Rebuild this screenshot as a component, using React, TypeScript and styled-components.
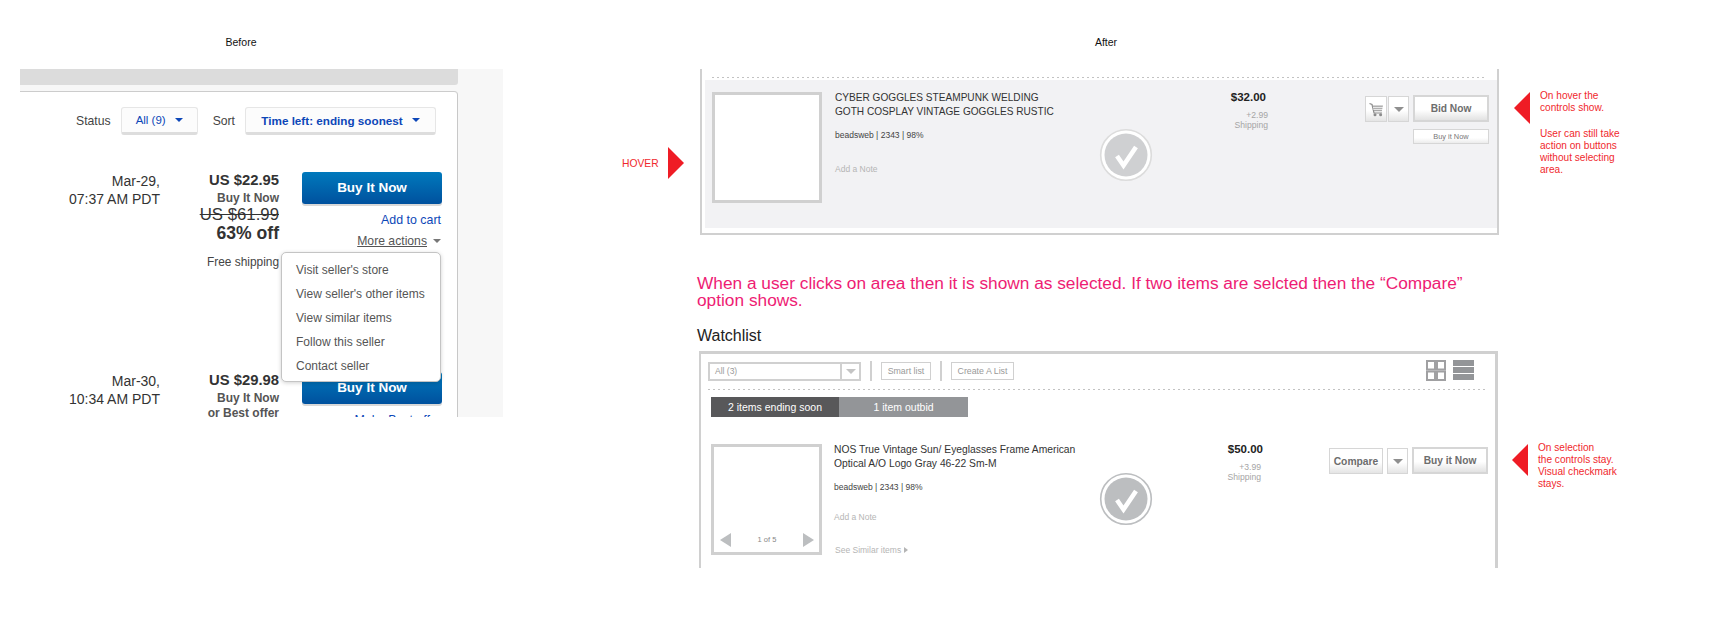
import React from "react";
import styled, { createGlobalStyle } from "styled-components";

const Global = createGlobalStyle`
  html, body { margin: 0; padding: 0; background: #fff; }
  body { font-family: "Liberation Sans", Arial, sans-serif; color: #333; }
`;

const Page = styled.div`
  display: flex;
  align-items: flex-start;
  width: 1723px;
  height: 640px;
  overflow: hidden;
  background: #fff;
`;
const BeforeCol = styled.section`
  margin-left: 20px;
  width: 483px;
  flex: none;
`;
const AfterCol = styled.section`
  margin-left: 119px;
  width: 1000px;
  flex: none;
`;
const Heading = styled.div<{ $w: number }>`
  width: ${(p) => p.$w}px;
  height: 69px;
  padding-top: 36px;
  box-sizing: border-box;
  text-align: center;
  font-size: 10.5px;
  line-height: 12px;
  color: #111;
`;

/* ---------- Before ---------- */
const Shot = styled.div`
  height: 348px;
  width: 483px;
  overflow: hidden;
  background: #f7f7f7;
`;
const GrayBar = styled.div`
  width: 438px;
  height: 16px;
  background: #dcdcdc;
  border-bottom-right-radius: 3px;
`;
const Card = styled.div`
  width: 438px;
  box-sizing: border-box;
  margin-top: 6px;
  height: 400px;
  background: #fff;
  border-top: 1px solid #ccc;
  border-right: 1px solid #c8c8c8;
  border-top-right-radius: 4px;
`;
const FilterRow = styled.div`
  display: flex;
  align-items: center;
  justify-content: flex-end;
  height: 28px;
  padding: 15px 21px 37px 0;
  font-size: 12.2px;
  color: #444;
`;
const FilterLabel = styled.span`
  margin: 0 10px 0 15px;
`;
const FilterButton = styled.div<{ $w: number }>`
  width: ${(p) => p.$w}px;
  height: 28px;
  box-sizing: border-box;
  display: flex;
  align-items: center;
  justify-content: center;
  gap: 9px;
  background: #fcfcfc;
  border: 1px solid #e6e6e6;
  border-bottom: 3px solid #ddd;
  border-radius: 3px;
  color: #0d47b8;
  font-size: 11.5px;
`;
const BoldBlue = styled.span`
  font-weight: 700;
  font-size: 11.7px;
`;
const Caret = styled.span<{ $c: string; $w?: number }>`
  display: inline-block;
  width: 0;
  height: 0;
  border-left: ${(p) => p.$w ?? 4.5}px solid transparent;
  border-right: ${(p) => p.$w ?? 4.5}px solid transparent;
  border-top: ${(p) => (p.$w ?? 4.5)}px solid ${(p) => p.$c};
`;
const Listing = styled.div`
  display: grid;
  grid-template-columns: 140px 119px 140px;
  column-gap: 0;
  height: 200px;
`;
const DateCell = styled.div`
  text-align: right;
  font-size: 14px;
  line-height: 18px;
  color: #333;
`;
const PriceCell = styled.div`
  text-align: right;
`;
const MainPrice = styled.div`
  font-size: 14.8px;
  line-height: 17px;
  font-weight: 700;
  color: #333;
`;
const Format = styled.div<{ $first?: boolean }>`
  margin-top: ${(p) => (p.$first ? 2 : 0)}px;
  font-size: 12px;
  line-height: 15px;
  font-weight: 700;
  color: #555;
`;
const WasPrice = styled.div`
  margin-top: 1px;
  font-size: 16.8px;
  line-height: 16px;
  color: #333;
  text-decoration: line-through;
`;
const Discount = styled.div`
  margin-top: 1px;
  font-size: 17.6px;
  line-height: 18px;
  font-weight: 700;
  color: #333;
`;
const Shipping = styled.div`
  margin-top: 12px;
  font-size: 11.9px;
  line-height: 16px;
  color: #444;
`;
const ActionCell = styled.div`
  position: relative;
  margin-left: 23px;
  width: 140px;
  text-align: right;
`;
const BuyButton = styled.div`
  height: 32px;
  line-height: 32px;
  text-align: center;
  border-radius: 3px;
  background: linear-gradient(#0079bc, #00519e);
  box-shadow: 0 2px 0 #d8d8d8;
  color: #fff;
  font-size: 13.5px;
  font-weight: 700;
`;
const ActionLink = styled.div`
  margin-top: 8px;
  padding-right: 1px;
  font-size: 12.4px;
  line-height: 16px;
  color: #0d47b8;
`;
const MoreActions = styled.div`
  margin-top: 5px;
  display: flex;
  justify-content: flex-end;
  align-items: center;
  gap: 6px;
  padding-right: 1px;
  font-size: 12.2px;
  line-height: 16px;
  color: #555;
`;
const Underlined = styled.span`
  text-decoration: underline;
`;
const Menu = styled.ul`
  position: absolute;
  z-index: 2;
  left: -21px;
  top: 80px;
  width: 160px;
  height: 130px;
  box-sizing: border-box;
  margin: 0;
  padding: 5px 0 0 14px;
  list-style: none;
  text-align: left;
  background: #fff;
  border: 1px solid #c4c4c4;
  border-radius: 5px;
  box-shadow: 0 1px 4px rgba(0, 0, 0, 0.18);
`;
const MenuItem = styled.li`
  height: 24px;
  line-height: 24px;
  font-size: 12px;
  color: #555;
`;

/* ---------- After ---------- */
const Band = styled.div`
  display: flex;
  align-items: flex-start;
`;
const HoverTag = styled.div`
  width: 78px;
  flex: none;
  padding-top: 78px;
  display: flex;
  align-items: center;
  gap: 9px;
  font-size: 10.3px;
  color: #f0282d;
`;
const WatchSpacer = styled.div`
  width: 77px;
  flex: none;
`;
const Arrow = styled.span<{ $dir: "left" | "right"; $w: number; $h: number; $c: string }>`
  display: inline-block;
  flex: none;
  width: 0;
  height: 0;
  border-top: ${(p) => p.$h / 2}px solid transparent;
  border-bottom: ${(p) => p.$h / 2}px solid transparent;
  ${(p) =>
    p.$dir === "left"
      ? `border-right: ${p.$w}px solid ${p.$c};`
      : `border-left: ${p.$w}px solid ${p.$c};`}
`;
const Note = styled.aside<{ $ml: number; $pt: number }>`
  flex: none;
  display: flex;
  align-items: flex-start;
  gap: 10px;
  margin-left: ${(p) => p.$ml}px;
  padding-top: ${(p) => p.$pt}px;
`;
const NoteText = styled.div`
  margin-top: -2px;
  width: 100px;
  font-size: 10.1px;
  line-height: 12px;
  color: #f0282d;
  p {
    margin: 0 0 14px;
  }
`;
const HoverCard = styled.div`
  flex: none;
  width: 799px;
  height: 166px;
  box-sizing: border-box;
  padding-top: 8px;
  border: 2px solid #d0d0d0;
  border-top: 0;
`;
const Dots = styled.div<{ $ml: number; $mr: number; $mt: number }>`
  height: 1px;
  margin: ${(p) => p.$mt}px ${(p) => p.$mr}px 0 ${(p) => p.$ml}px;
  background: repeating-linear-gradient(to right, #c2c2c2 0 2px, transparent 2px 5px);
`;
const HoverPanel = styled.div`
  margin: 2px 0 0 3px;
  height: 148px;
  box-sizing: border-box;
  padding: 12px 0 0 7px;
  background: #f2f2f4;
`;
const ItemRow = styled.div<{ $cols: string }>`
  display: grid;
  grid-template-columns: ${(p) => p.$cols};
  align-items: start;
`;
const Thumb = styled.div<{ $h: number }>`
  height: ${(p) => p.$h}px;
  box-sizing: border-box;
  border: 3px solid #d0d0d0;
  background: #fff;
  display: flex;
  justify-content: space-between;
  align-items: flex-end;
  padding: 0 5px 5px 6px;
`;
const PagerText = styled.span`
  font-size: 7.5px;
  line-height: 14px;
  color: #888;
`;
const Info = styled.div<{ $pl: number }>`
  padding-left: ${(p) => p.$pl}px;
  margin-top: -1px;
`;
const Title = styled.div<{ $size: number }>`
  font-size: ${(p) => p.$size}px;
  line-height: 14px;
  color: #333;
  white-space: nowrap;
`;
const Seller = styled.div`
  margin-top: 10px;
  font-size: 8.5px;
  line-height: 12px;
  color: #444;
`;
const AddNote = styled.div<{ $mt: number }>`
  margin-top: ${(p) => p.$mt}px;
  font-size: 8.5px;
  line-height: 12px;
  color: #b5b5b5;
`;
const Similar = styled.div`
  margin-top: 21px;
  margin-left: 1px;
  display: flex;
  align-items: center;
  gap: 3px;
  font-size: 8.5px;
  line-height: 12px;
  color: #b5b5b5;
`;
const CheckWrap = styled.div<{ $mt: number }>`
  margin-top: ${(p) => p.$mt}px;
  height: 54px;
`;
const PriceCol = styled.div`
  text-align: right;
  margin-top: -2px;
`;
const SmallPrice = styled.div<{ $pr: number }>`
  padding-right: ${(p) => p.$pr}px;
  font-size: 11.5px;
  line-height: 14px;
  font-weight: 700;
  color: #222;
`;
const ShipCost = styled.div<{ $pr: number }>`
  margin-top: 6px;
  padding-right: ${(p) => p.$pr}px;
  font-size: 8.6px;
  line-height: 10px;
  color: #a5a5a5;
`;
const Actions = styled.div<{ $ml: number }>`
  margin-left: ${(p) => p.$ml}px;
  margin-top: 3px;
  width: 160px;
`;
const ActionLine = styled.div`
  display: flex;
  align-items: flex-end;
  gap: 4px;
`;
const Square = styled.div<{ $w: number; $tight?: boolean }>`
  width: ${(p) => p.$w}px;
  height: 26px;
  box-sizing: border-box;
  margin-left: ${(p) => (p.$tight ? -3 : 0)}px;
  display: flex;
  align-items: center;
  justify-content: center;
  background: linear-gradient(#fff 55%, #e4e4e4);
  border: 1px solid #d6d6d6;
  font-size: 10.3px;
  font-weight: 700;
  color: #6d6d6d;
`;
const Primary = styled.div`
  width: 76px;
  height: 27px;
  box-sizing: border-box;
  display: flex;
  align-items: center;
  justify-content: center;
  background: linear-gradient(#fff 55%, #e2e2e2);
  border: 2px solid #d6d6d6;
  font-size: 10.2px;
  font-weight: 700;
  color: #6d6d6d;
`;
const Secondary = styled.div`
  width: 76px;
  height: 15px;
  box-sizing: border-box;
  margin: 7px 0 0 48px;
  text-align: center;
  background: linear-gradient(#fff 60%, #ececec);
  border: 1px solid #d6d6d6;
  font-size: 7.4px;
  line-height: 13px;
  color: #777;
`;
const Message = styled.p`
  margin: 40px 0 0 75px;
  width: 790px;
  font-size: 17.3px;
  line-height: 17px;
  color: #ee1c74;
`;
const ListHeading = styled.h2`
  margin: 17px 0 5px 75px;
  font-size: 16px;
  line-height: 20px;
  font-weight: 400;
  color: #222;
`;
const WatchCard = styled.div`
  flex: none;
  width: 799px;
  height: 217px;
  box-sizing: border-box;
  border: 3px solid #d0d0d0;
  border-left-width: 2px;
  border-bottom: 0;
`;
const Toolbar = styled.div`
  display: flex;
  align-items: flex-start;
  height: 19px;
  padding: 8px 21px 0 7px;
`;
const Select = styled.div`
  width: 153px;
  height: 19px;
  box-sizing: border-box;
  display: flex;
  justify-content: space-between;
  border: 2px solid #d0d0d0;
  margin-right: 9px;
  font-size: 8.5px;
  line-height: 15px;
  color: #999;
  padding-left: 5px;
`;
const SelectArrow = styled.div`
  width: 17px;
  border-left: 2px solid #d0d0d0;
  display: flex;
  align-items: center;
  justify-content: center;
`;
const Divider = styled.div`
  width: 2px;
  height: 20px;
  margin: -1px 9px 0 0;
  background: #d0d0d0;
`;
const ToolButton = styled.div<{ $w: number; $mr: number }>`
  width: ${(p) => p.$w}px;
  height: 18px;
  box-sizing: border-box;
  margin-right: ${(p) => p.$mr}px;
  text-align: center;
  border: 1px solid #d0d0d0;
  font-size: 8.8px;
  line-height: 16px;
  color: #999;
`;
const ViewIcons = styled.div`
  margin-left: auto;
  margin-top: -2px;
  display: flex;
  gap: 7px;
`;
const Tabs = styled.div`
  display: flex;
  margin: 7px 0 27px 10px;
`;
const Tab = styled.div<{ $dark?: boolean }>`
  width: ${(p) => (p.$dark ? 128 : 129)}px;
  height: 20px;
  line-height: 20px;
  text-align: center;
  font-size: 10.5px;
  color: #fff;
  background: ${(p) => (p.$dark ? "#58585a" : "#939598")};
`;
const WatchBody = styled.div`
  padding-left: 10px;
`;

const CheckBadge = ({ fill, ring }: { fill: string; ring: string }) => (
  <svg width="54" height="54" viewBox="0 0 54 54">
    <circle cx="27" cy="27" r="25.3" fill="#fff" stroke={ring} strokeWidth="1.6" />
    <circle cx="27" cy="27" r="21.5" fill={fill} />
    <path d="M18 28 L24.5 37.5 L37 19" fill="none" stroke="#fff" strokeWidth="4.6" />
  </svg>
);

const CartIcon = () => (
  <svg width="15" height="15" viewBox="0 0 15 15">
    <path d="M0.5 1.5 L3 2.5 L5 11 H13" fill="none" stroke="#8b8b8b" strokeWidth="1.2" />
    <path d="M3.6 3.5 H14 L12.8 9.3 H5" fill="#a8a8a8" />
    <path d="M4 5.4 H14 M4.4 7.4 H14" stroke="#fff" strokeWidth="0.8" />
    <circle cx="6" cy="12.8" r="1.5" fill="#8b8b8b" />
    <circle cx="11.6" cy="12.8" r="1.5" fill="#8b8b8b" />
  </svg>
);

const GridIcon = () => (
  <svg width="20" height="21" viewBox="0 0 20 21">
    <g fill="#fff" stroke="#a0a0a2" strokeWidth="2">
      <rect x="1" y="1" width="8" height="8.5" />
      <rect x="11" y="1" width="8" height="8.5" />
      <rect x="1" y="11.5" width="8" height="8.5" />
      <rect x="11" y="11.5" width="8" height="8.5" />
    </g>
  </svg>
);

const ListIcon = () => (
  <svg width="21" height="20" viewBox="0 0 21 20">
    <rect y="0" width="21" height="6" fill="#939598" />
    <rect y="7" width="21" height="6" fill="#939598" />
    <rect y="14" width="21" height="6" fill="#939598" />
  </svg>
);

const menuItems = [
  "Visit seller's store",
  "View seller's other items",
  "View similar items",
  "Follow this seller",
  "Contact seller",
];

export default function App() {
  return (
    <Page>
      <Global />
      <BeforeCol>
        <Heading $w={442}>Before</Heading>
        <Shot>
          <GrayBar />
          <Card>
            <FilterRow>
              <FilterLabel>Status</FilterLabel>
              <FilterButton $w={77}>
                All (9) <Caret $c="#0d47b8" />
              </FilterButton>
              <FilterLabel>Sort</FilterLabel>
              <FilterButton $w={191}>
                <BoldBlue>Time left: ending soonest</BoldBlue> <Caret $c="#0d47b8" />
              </FilterButton>
            </FilterRow>
            <Listing>
              <DateCell>
                Mar-29,
                <br />
                07:37 AM PDT
              </DateCell>
              <PriceCell>
                <MainPrice>US $22.95</MainPrice>
                <Format $first>Buy It Now</Format>
                <WasPrice>US $61.99</WasPrice>
                <Discount>63% off</Discount>
                <Shipping>Free shipping</Shipping>
              </PriceCell>
              <ActionCell>
                <BuyButton>Buy It Now</BuyButton>
                <ActionLink>Add to cart</ActionLink>
                <MoreActions>
                  <Underlined>More actions</Underlined> <Caret $c="#777" />
                </MoreActions>
                <Menu>
                  {menuItems.map((m) => (
                    <MenuItem key={m}>{m}</MenuItem>
                  ))}
                </Menu>
              </ActionCell>
            </Listing>
            <Listing>
              <DateCell>
                Mar-30,
                <br />
                10:34 AM PDT
              </DateCell>
              <PriceCell>
                <MainPrice>US $29.98</MainPrice>
                <Format $first>Buy It Now</Format>
                <Format>or Best offer</Format>
              </PriceCell>
              <ActionCell>
                <BuyButton>Buy It Now</BuyButton>
                <ActionLink>Make Best offer</ActionLink>
              </ActionCell>
            </Listing>
          </Card>
        </Shot>
      </BeforeCol>

      <AfterCol>
        <Heading $w={968}>After</Heading>
        <Band>
          <HoverTag>
            HOVER
            <Arrow $dir="right" $w={16} $h={33} $c="#ef1c25" />
          </HoverTag>
          <HoverCard>
            <Dots $ml={10} $mr={10} $mt={0} />
            <HoverPanel>
              <ItemRow $cols="110px 277px 54px 115px 1fr">
                <Thumb $h={111} />
                <Info $pl={13}>
                  <Title $size={10.1}>CYBER GOGGLES STEAMPUNK WELDING</Title>
                  <Title $size={10.1}>GOTH COSPLAY VINTAGE GOGGLES RUSTIC</Title>
                  <Seller>beadsweb | 2343 | 98%</Seller>
                  <AddNote $mt={22}>Add a Note</AddNote>
                </Info>
                <CheckWrap $mt={36}>
                  <CheckBadge fill="#cfd0d2" ring="#dcdcdc" />
                </CheckWrap>
                <PriceCol>
                  <SmallPrice $pr={2}>$32.00</SmallPrice>
                  <ShipCost $pr={0}>
                    +2.99
                    <br />
                    Shipping
                  </ShipCost>
                </PriceCol>
                <Actions $ml={97}>
                  <ActionLine>
                    <Square $w={22}>
                      <CartIcon />
                    </Square>
                    <Square $w={21} $tight>
                      <Caret $c="#8f8f8f" $w={5} />
                    </Square>
                    <Primary>Bid Now</Primary>
                  </ActionLine>
                  <Secondary>Buy it Now</Secondary>
                </Actions>
              </ItemRow>
            </HoverPanel>
          </HoverCard>
          <Note $ml={15} $pt={23}>
            <Arrow $dir="left" $w={16} $h={32} $c="#ef1c25" />
            <NoteText>
              <p>
                On hover the
                <br />
                controls show.
              </p>
              User can still take
              <br />
              action on buttons
              <br />
              without selecting
              <br />
              area.
            </NoteText>
          </Note>
        </Band>

        <Message>
          When a user clicks on area then it is shown as selected. If two items are selcted then the “Compare” option
          shows.
        </Message>
        <ListHeading>Watchlist</ListHeading>

        <Band>
          <WatchSpacer />
          <WatchCard>
            <Toolbar>
              <Select>
                All (3)
                <SelectArrow>
                  <Caret $c="#c4c4c4" $w={5} />
                </SelectArrow>
              </Select>
              <Divider />
              <ToolButton $w={50} $mr={9}>
                Smart list
              </ToolButton>
              <Divider />
              <ToolButton $w={63} $mr={0}>
                Create A List
              </ToolButton>
              <ViewIcons>
                <GridIcon />
                <ListIcon />
              </ViewIcons>
            </Toolbar>
            <Dots $ml={7} $mr={10} $mt={8} />
            <Tabs>
              <Tab $dark>2 items ending soon</Tab>
              <Tab>1 item outbid</Tab>
            </Tabs>
            <WatchBody>
              <ItemRow $cols="111px 277px 54px 110px 1fr">
                <Thumb $h={111}>
                  <Arrow $dir="left" $w={11} $h={14} $c="#bcbec0" />
                  <PagerText>1 of 5</PagerText>
                  <Arrow $dir="right" $w={11} $h={14} $c="#bcbec0" />
                </Thumb>
                <Info $pl={12}>
                  <Title $size={10.3}>NOS True Vintage Sun/ Eyeglasses Frame American</Title>
                  <Title $size={10.3}>Optical A/O Logo Gray 46-22 Sm-M</Title>
                  <Seller>beadsweb | 2343 | 98%</Seller>
                  <AddNote $mt={18}>Add a Note</AddNote>
                  <Similar>
                    See Similar items <Arrow $dir="right" $w={4} $h={6} $c="#b5b5b5" />
                  </Similar>
                </Info>
                <CheckWrap $mt={28}>
                  <CheckBadge fill="#bcbec0" ring="#bcbec0" />
                </CheckWrap>
                <PriceCol>
                  <SmallPrice $pr={0}>$50.00</SmallPrice>
                  <ShipCost $pr={2}>
                    +3.99
                    <br />
                    Shipping
                  </ShipCost>
                </PriceCol>
                <Actions $ml={66}>
                  <ActionLine>
                    <Square $w={54}>Compare</Square>
                    <Square $w={21}>
                      <Caret $c="#8f8f8f" $w={5} />
                    </Square>
                    <Primary>Buy it Now</Primary>
                  </ActionLine>
                </Actions>
              </ItemRow>
            </WatchBody>
          </WatchCard>
          <Note $ml={14} $pt={93}>
            <Arrow $dir="left" $w={16} $h={33} $c="#ef1c25" />
            <NoteText>
              On selection
              <br />
              the controls stay.
              <br />
              Visual checkmark
              <br />
              stays.
            </NoteText>
          </Note>
        </Band>
      </AfterCol>
    </Page>
  );
}
